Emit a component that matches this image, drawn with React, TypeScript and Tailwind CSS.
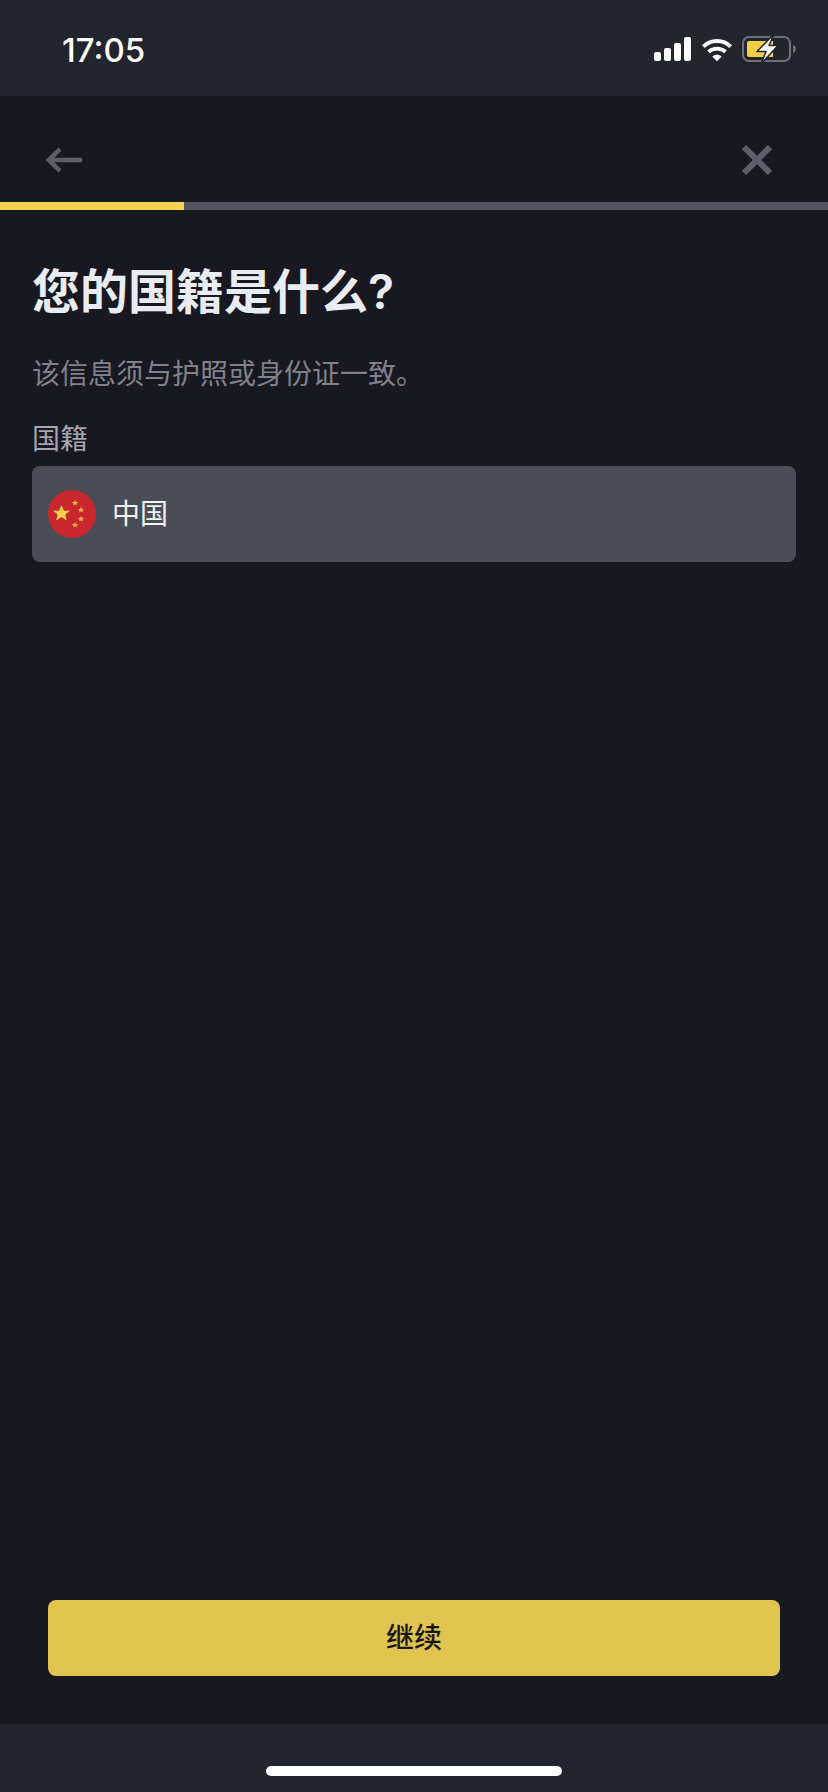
function StatusIcons() {
  return (
    <div className="flex items-center mt-[2px]">
      <svg width="37" height="24" viewBox="0 0 37 24" fill="#fff" className="mr-[10px]">
        <rect x="0" y="15" width="7" height="9" rx="2" />
        <rect x="10" y="11" width="7" height="13" rx="2" />
        <rect x="20" y="6" width="7" height="18" rx="2" />
        <rect x="30" y="0" width="7" height="24" rx="2" />
      </svg>
      <svg width="32" height="25" viewBox="0 0 34 25" fill="none" stroke="#fff" className="mr-[9px]">
        <path d="M2.500 9.500C10.500 1.500 23.500 1.500 31.500 9.500" strokeWidth="4.200" />
        <path d="M8 15C13 10.500 21 10.500 26 15" strokeWidth="4" />
        <path d="M12 20L17 25L22 20C19 17.500 15 17.500 12 20Z" fill="#fff" stroke="none" />
      </svg>
      <svg width="54" height="30" viewBox="0 0 54 30" fill="none">
        <rect x="1" y="3" width="47" height="24" rx="6" stroke="#6f7076" strokeWidth="2" />
        <path d="M5 9a2 2 0 0 1 2-2h24v16H7a2 2 0 0 1-2-2Z" fill="#f3cf45" />
        <path d="M51 11c2 1 3 2.500 3 4s-1 3-3 4Z" fill="#6f7076" />
        <path
          d="M32 0L15 17.500H24L19 30L36 11.500H27Z"
          fill="#fff"
          stroke="#22242e"
          strokeWidth="1.500"
          strokeLinejoin="round"
        />
      </svg>
    </div>
  );
}

function ChinaFlag() {
  const star = 'M0-1 .29-.31 1-.31 .45 .12 .62 .81 0 .42-.62 .81-.45 .12-1-.31-.29-.31Z';
  return (
    <svg width="48" height="48" viewBox="0 0 48 48" className="shrink-0">
      <circle cx="24" cy="24" r="24" fill="#c9272d" />
      <path d={star} fill="#f7d24d" transform="translate(13.500 23.500) scale(8.500)" />
      <path d={star} fill="#e9b64a" transform="translate(27 13) scale(3.200)" />
      <path d={star} fill="#e9b64a" transform="translate(33 20) scale(3.200)" />
      <path d={star} fill="#e9b64a" transform="translate(33 29) scale(3.200)" />
      <path d={star} fill="#e9b64a" transform="translate(27 35) scale(3.200)" />
    </svg>
  );
}

export default function App() {
  return (
    <div
      className="w-[828px] h-[1792px] flex flex-col bg-[#171820] overflow-hidden"
      style={{ fontFamily: 'Inter, "Noto Sans CJK SC", sans-serif' }}
    >
      <div className="h-[96px] shrink-0 bg-[#22242e] flex items-center justify-between pl-[62px] pr-[32px]">
        <span className="text-[33px] leading-[40px] font-medium text-white mt-[4px]">17:05</span>
        <StatusIcons />
      </div>

      <div className="h-[106px] shrink-0 flex items-center justify-between pl-[46px] pr-[56px] pt-[22px]">
        <svg width="36" height="26" viewBox="0 0 36 26" fill="none" stroke="#5d5e67" strokeWidth="4.500">
          <path d="M36 13H3" />
          <path d="M14 2L3 13L14 24" />
        </svg>
        <svg width="30" height="30" viewBox="0 0 30 30" fill="none" stroke="#5d5e67" strokeWidth="6">
          <path d="M2 2L28 28" />
          <path d="M28 2L2 28" />
        </svg>
      </div>

      <div className="h-[8px] shrink-0 bg-[#54545e]">
        <div className="h-full w-[184px] bg-[#f5d251]" />
      </div>

      <div className="flex-1 flex flex-col px-[32px]">
        <h1 className="mt-[50px] text-[48px] leading-[64px] font-semibold text-[#eaecf3]">您的国籍是什么?</h1>
        <p className="mt-[30px] text-[28px] leading-[40px] text-[#80818a]">该信息须与护照或身份证一致。</p>
        <p className="mt-[25px] text-[28px] leading-[40px] text-[#a5a6ad]">国籍</p>
        <div className="mt-[7px] h-[96px] rounded-[8px] bg-[#4a4c56] flex items-center pl-[16px] gap-[16px]">
          <ChinaFlag />
          <span className="text-[28px] leading-[40px] text-[#f2f3f6]">中国</span>
        </div>
      </div>

      <div className="shrink-0 px-[48px] pb-[48px]">
        <button className="w-full h-[76px] rounded-[8px] bg-[#e0c44f] text-[28px] font-medium text-[#1b1710]">
          继续
        </button>
      </div>

      <div className="h-[68px] shrink-0 bg-[#22242e] flex justify-center pt-[42px]">
        <div className="w-[296px] h-[10px] rounded-full bg-white" />
      </div>
    </div>
  );
}
